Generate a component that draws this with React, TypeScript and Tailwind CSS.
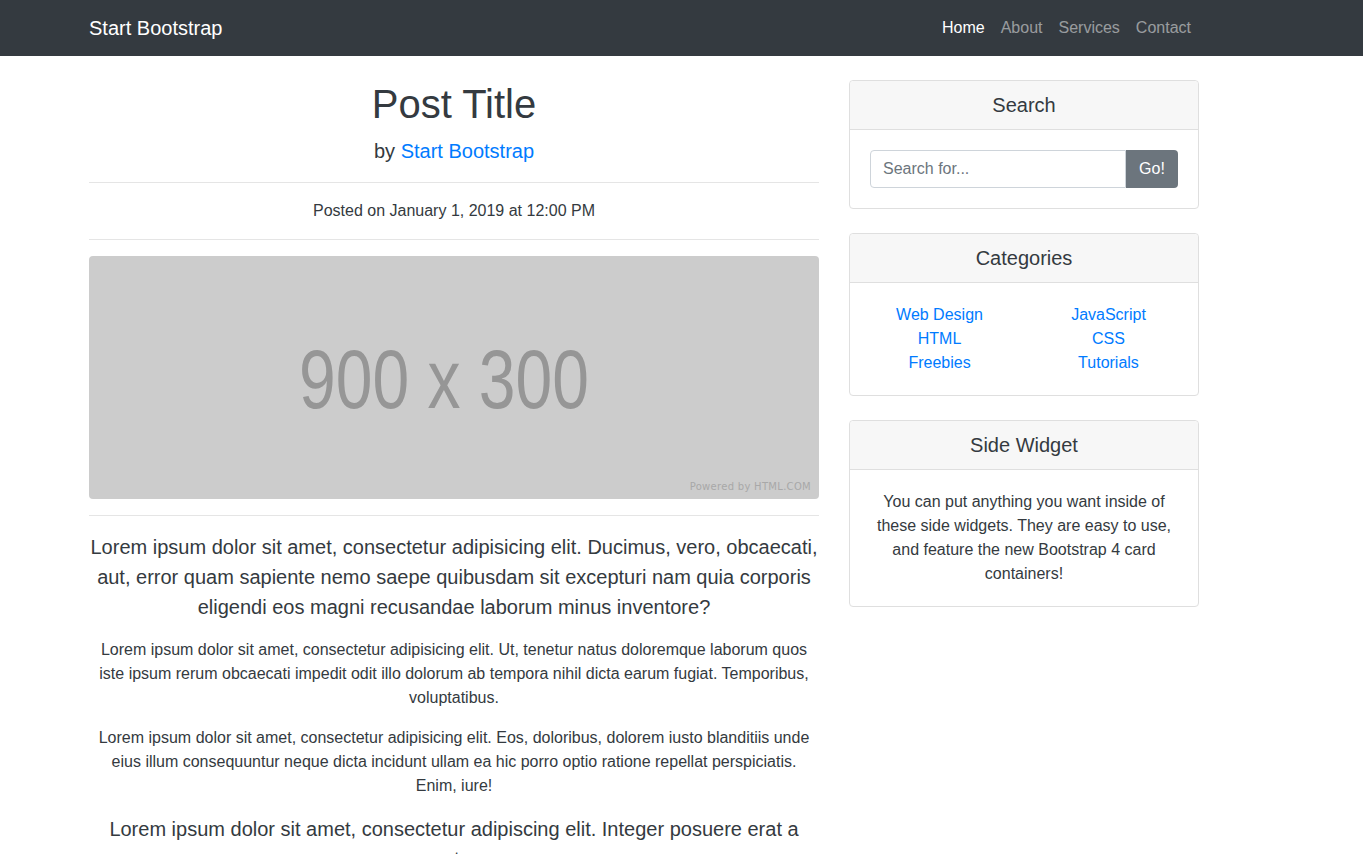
const navLinks = [
  { text: 'Home', active: true },
  { text: 'About', active: false },
  { text: 'Services', active: false },
  { text: 'Contact', active: false },
];

const categories = [
  ['Web Design', 'HTML', 'Freebies'],
  ['JavaScript', 'CSS', 'Tutorials'],
];

function Card({ title, children }: { title: string; children: React.ReactNode }) {
  return (
    <div className="mb-6 rounded border border-[#dfdfdf] bg-white">
      <h5 className="h-[49px] border-b border-[#dfdfdf] bg-[#f7f7f7] rounded-t text-center text-[20px] leading-[48px] text-[#343a40]">
        {title}
      </h5>
      <div className="p-5">{children}</div>
    </div>
  );
}

export default function App() {
  return (
    <div className="min-h-screen bg-white font-['Liberation_Sans',Arial,sans-serif] text-[#343a40]">
      <nav className="h-14 bg-[#343a40]">
        <div className="ml-[74px] w-[1140px] px-[15px] h-full flex items-center justify-between">
          <span className="text-white text-[20px]">Start Bootstrap</span>
          <ul className="flex">
            {navLinks.map((l) => (
              <li key={l.text} className={`px-2 text-[16px] ${l.active ? 'text-white' : 'text-white/50'}`}>
                {l.text}
              </li>
            ))}
          </ul>
        </div>
      </nav>

      <div className="ml-[74px] w-[1140px] flex">
        <div className="w-[760px] px-[15px] text-center">
          <h1 className="mt-6 mb-2 text-[40px] leading-[48px]">Post Title</h1>
          <p className="text-[20px] leading-[30px] mb-4">
            by <a className="text-[#007bff]">Start Bootstrap</a>
          </p>
          <hr className="border-[#e5e5e5]" />
          <p className="my-4 text-[16px] leading-6">Posted on January 1, 2019 at 12:00 PM</p>
          <hr className="border-[#e5e5e5]" />
          <div className="mt-4 relative h-[243px] rounded bg-[#cccccc] flex items-center justify-center overflow-hidden">
            <span className="mr-5 text-[66px] leading-none text-[#969696] scale-y-[1.27] mt-[3px]">900 x 300</span>
            <span className="absolute right-2 bottom-[5px] text-[10px] tracking-[0.3px] text-[#a8a8a8] font-['DejaVu_Sans',sans-serif]">
              Powered by HTML.COM
            </span>
          </div>
          <hr className="mt-4 border-[#e5e5e5]" />
          <p className="mt-4 mb-4 text-[20px] leading-[30px]">
            Lorem ipsum dolor sit amet, consectetur adipisicing elit. Ducimus, vero, obcaecati, aut, error quam sapiente nemo saepe quibusdam sit excepturi nam quia corporis eligendi eos magni recusandae laborum minus inventore?
          </p>
          <p className="mb-4 text-[16px] leading-6">
            Lorem ipsum dolor sit amet, consectetur adipisicing elit. Ut, tenetur natus doloremque laborum quos iste ipsum rerum obcaecati impedit odit illo dolorum ab tempora nihil dicta earum fugiat. Temporibus, voluptatibus.
          </p>
          <p className="mb-4 text-[16px] leading-6">
            Lorem ipsum dolor sit amet, consectetur adipisicing elit. Eos, doloribus, dolorem iusto blanditiis unde eius illum consequuntur neque dicta incidunt ullam ea hic porro optio ratione repellat perspiciatis. Enim, iure!
          </p>
          <blockquote className="mb-4 text-[20px] leading-[30px]">
            Lorem ipsum dolor sit amet, consectetur adipiscing elit. Integer posuere erat a ante.
          </blockquote>
        </div>

        <div className="w-[380px] px-[15px] pt-6">
          <Card title="Search">
            <div className="flex h-[38px]">
              <input
                placeholder="Search for..."
                className="flex-1 min-w-0 rounded-l border border-[#ced4da] px-3 text-[16px] placeholder:text-[#6c757d] outline-none"
              />
              <button className="w-[52px] rounded-r bg-[#6c757d] text-white text-[16px]">Go!</button>
            </div>
          </Card>
          <Card title="Categories">
            <div className="flex -mx-[15px]">
              {categories.map((col, i) => (
                <ul key={i} className="w-1/2 px-[15px] text-center">
                  {col.map((c) => (
                    <li key={c} className="text-[16px] leading-6 text-[#007bff]">{c}</li>
                  ))}
                </ul>
              ))}
            </div>
          </Card>
          <Card title="Side Widget">
            <p className="text-center text-[16px] leading-6">
              You can put anything you want inside of these side widgets. They are easy to use, and feature the new Bootstrap 4 card containers!
            </p>
          </Card>
        </div>
      </div>
    </div>
  );
}
